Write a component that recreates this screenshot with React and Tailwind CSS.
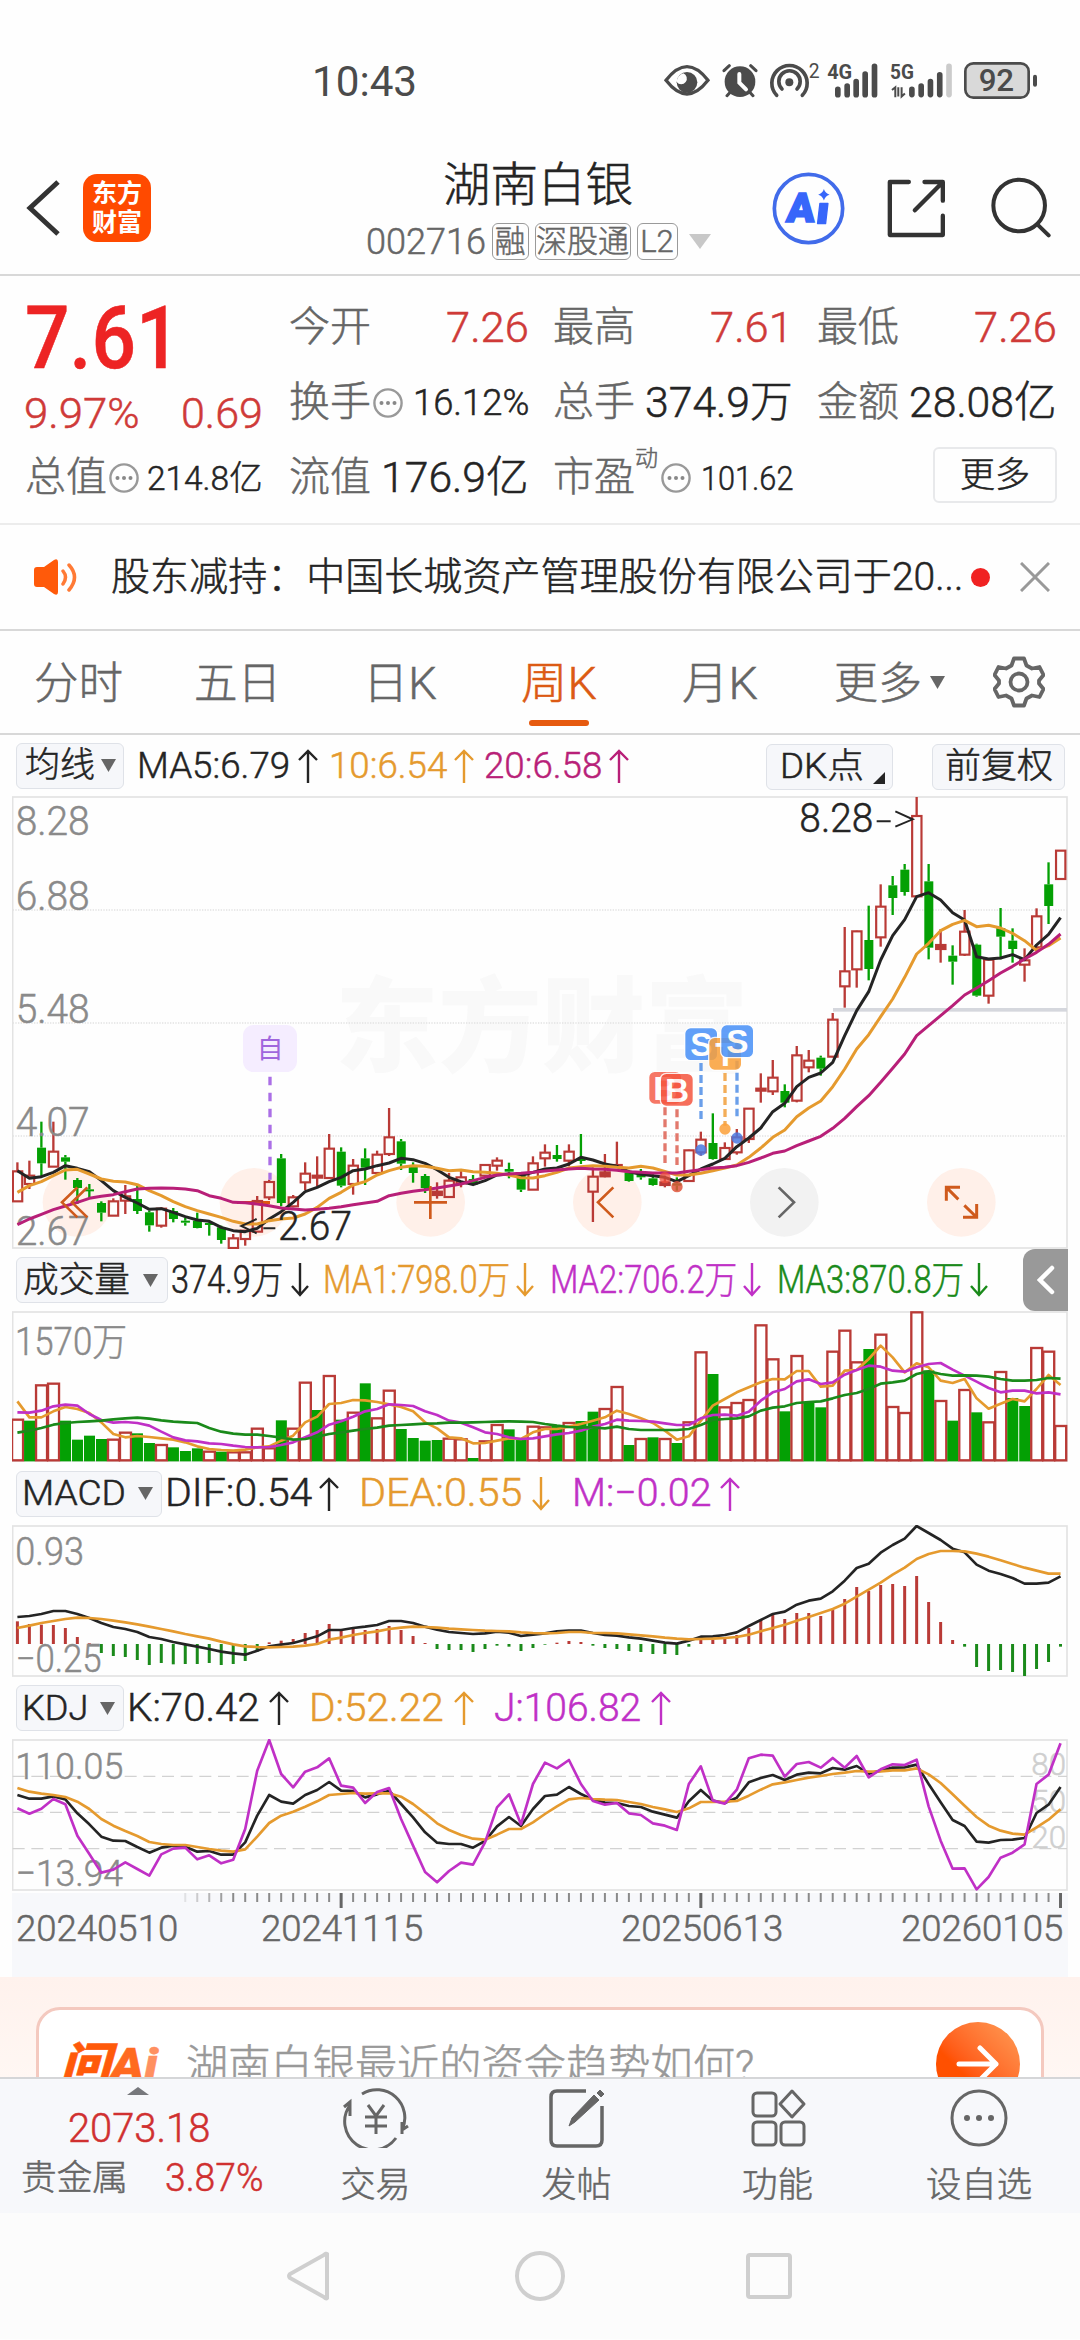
import React, { useLayoutEffect, useRef, useState } from 'react';

const FONT = "font-['Roboto','Noto_Sans_CJK_SC',sans-serif] font-light [-webkit-text-stroke:0.5px]";

// squeezes or stretches a single line of text to the width of its box
const Fit = ({ className = '', children }) => {
  const inner = useRef(null);
  const [scale, setScale] = useState(1);

  useLayoutEffect(() => {
    const el = inner.current;
    setScale(el.parentElement.clientWidth / el.offsetWidth);
  }, [children]);

  return (
    <div className={`shrink-0 whitespace-nowrap leading-none ${className}`}>
      <span ref={inner} className="inline-block origin-left" style={{ transform: `scaleX(${scale})` }}>
        {children}
      </span>
    </div>
  );
};

/* ---------- chart data (one entry per week) ---------- */

// [direction, high, body top, body bottom, low]
const CANDLES = [
  ['r', 1120, 1147, 1237, 1237], ['r', 1115, 1160, 1185, 1200], ['g', 998, 1076, 1123, 1165], ['r', 998, 1088, 1133, 1133],
  ['g', 1098, 1105, 1118, 1172], ['g', 1167, 1173, 1197, 1245], ['g', 1185, 1201, 1206, 1227], ['g', 1237, 1242, 1271, 1297],
  ['r', 1228, 1237, 1280, 1280], ['r', 1188, 1222, 1235, 1275], ['g', 1188, 1230, 1266, 1275], ['g', 1265, 1270, 1309, 1328],
  ['r', 1255, 1259, 1310, 1316], ['g', 1257, 1266, 1290, 1300], ['g', 1287, 1295, 1301, 1310], ['g', 1271, 1295, 1317, 1318],
  ['g', 1300, 1302, 1308, 1340], ['g', 1310, 1315, 1353, 1364], ['r', 1335, 1348, 1377, 1378], ['r', 1325, 1325, 1350, 1370],
  ['r', 1221, 1236, 1328, 1328], ['r', 1172, 1179, 1225, 1233], ['g', 1095, 1108, 1242, 1252], ['r', 1218, 1225, 1252, 1255],
  ['r', 1120, 1154, 1180, 1203], ['r', 1102, 1160, 1166, 1193], ['r', 1035, 1079, 1167, 1167], ['g', 1075, 1088, 1190, 1195],
  ['r', 1110, 1130, 1185, 1217], ['g', 1078, 1108, 1136, 1188], ['r', 1085, 1097, 1152, 1152], ['r', 957, 1045, 1095, 1101],
  ['g', 1050, 1057, 1124, 1143], ['g', 1120, 1130, 1152, 1181], ['g', 1155, 1161, 1197, 1212], ['r', 1180, 1208, 1218, 1229],
  ['r', 1152, 1175, 1224, 1226], ['r', 1143, 1165, 1183, 1195], ['g', 1158, 1170, 1187, 1187], ['r', 1125, 1128, 1160, 1165],
  ['r', 1105, 1115, 1130, 1145], ['g', 1121, 1140, 1148, 1168], ['g', 1160, 1160, 1202, 1209], ['r', 1102, 1123, 1202, 1202],
  ['r', 1066, 1091, 1108, 1133], ['g', 1068, 1098, 1110, 1118], ['r', 1066, 1088, 1115, 1132], ['g', 1035, 1110, 1115, 1125],
  ['r', 1135, 1163, 1208, 1299], ['r', 1095, 1150, 1162, 1165], ['r', 1058, 1128, 1133, 1133], ['g', 1145, 1150, 1176, 1178],
  ['g', 1140, 1158, 1165, 1172], ['g', 1150, 1168, 1188, 1190], ['r', 1160, 1180, 1188, 1195], ['g', 1165, 1183, 1190, 1205],
  ['r', 1082, 1084, 1176, 1176], ['r', 1028, 1052, 1090, 1100], ['g', 973, 1062, 1110, 1112], ['r', 1060, 1077, 1110, 1110],
  ['r', 1020, 1045, 1090, 1097], ['r', 957, 959, 1050, 1062], ['r', 853, 899, 904, 941], ['r', 813, 866, 907, 918],
  ['g', 886, 906, 941, 955], ['r', 771, 799, 935, 940], ['r', 783, 815, 835, 850], ['g', 800, 806, 839, 860],
  ['r', 672, 692, 803, 805], ['r', 414, 547, 592, 656], ['r', 425, 427, 541, 596], ['g', 350, 453, 540, 574],
  ['r', 286, 353, 445, 473], ['g', 261, 289, 327, 378], ['g', 225, 242, 309, 320], ['r', 24, 81, 322, 322],
  ['g', 225, 277, 476, 511], ['r', 420, 468, 480, 521], ['g', 469, 500, 518, 587], ['r', 363, 428, 497, 501],
  ['g', 464, 467, 620, 623], ['r', 510, 512, 620, 644], ['g', 357, 417, 443, 511], ['g', 418, 455, 480, 521],
  ['r', 478, 514, 527, 578], ['r', 358, 382, 475, 480], ['g', 220, 286, 351, 405], ['r', 185, 185, 270, 270],
];

const MA5 = [1145, 1168, 1163, 1150, 1130, 1138, 1148, 1175, 1205, 1225, 1242, 1261, 1259, 1270, 1283, 1293, 1297, 1315, 1325, 1328, 1318, 1290, 1268, 1240, 1208, 1195, 1178, 1165, 1145, 1140, 1130, 1122, 1108, 1112, 1123, 1142, 1165, 1178, 1187, 1175, 1158, 1155, 1160, 1150, 1140, 1137, 1125, 1105, 1113, 1125, 1132, 1148, 1156, 1160, 1165, 1178, 1160, 1140, 1125, 1108, 1073, 1047, 1017, 968, 943, 893, 865, 852, 820, 740, 665, 608, 513, 440, 392, 323, 311, 333, 371, 393, 503, 510, 507, 497, 512, 468, 436, 386];
const MA10 = [1210, 1190, 1178, 1160, 1143, 1141, 1155, 1170, 1177, 1179, 1187, 1205, 1220, 1238, 1253, 1265, 1275, 1285, 1297, 1305, 1305, 1295, 1290, 1287, 1275, 1255, 1228, 1210, 1188, 1178, 1158, 1145, 1135, 1130, 1132, 1138, 1145, 1143, 1148, 1150, 1153, 1158, 1166, 1167, 1160, 1150, 1137, 1133, 1130, 1132, 1135, 1137, 1132, 1137, 1147, 1158, 1158, 1153, 1145, 1137, 1128, 1105, 1077, 1045, 1023, 983, 957, 936, 893, 840, 780, 737, 683, 630, 565, 495, 463, 425, 406, 394, 413, 409, 417, 433, 455, 484, 470, 447];
const MA20 = [1307, 1290, 1276, 1262, 1251, 1240, 1228, 1222, 1217, 1208, 1200, 1198, 1197, 1198, 1200, 1205, 1220, 1228, 1240, 1241, 1245, 1250, 1257, 1260, 1263, 1261, 1258, 1253, 1247, 1242, 1237, 1220, 1213, 1207, 1202, 1197, 1191, 1185, 1175, 1165, 1158, 1155, 1153, 1150, 1146, 1143, 1140, 1138, 1140, 1141, 1144, 1148, 1150, 1152, 1152, 1152, 1147, 1142, 1137, 1135, 1130, 1120, 1107, 1093, 1086, 1070, 1056, 1042, 1018, 988, 953, 920, 880, 838, 795, 740, 710, 680, 650, 618, 597, 575, 552, 532, 510, 490, 466, 435];

const VOLUME = [512, 515, 409, 404, 515, 572, 560, 570, 572, 551, 553, 582, 588, 595, 606, 598, 608, 608, 610, 610, 539, 598, 514, 539, 401, 483, 381, 512, 491, 403, 508, 425, 540, 567, 575, 573, 569, 571, 627, 577, 528, 541, 571, 533, 535, 530, 522, 516, 488, 480, 414, 588, 570, 565, 570, 582, 520, 310, 375, 475, 462, 453, 229, 331, 487, 321, 462, 475, 308, 245, 340, 300, 257, 474, 492, 190, 364, 456, 515, 423, 490, 520, 369, 447, 471, 297, 308, 531];
const VOLUME_UP = 'rgrrggggrrggrgggrgrrrrgrrgrgrgrrgggg' + 'rrgrrggrrgrggrrgrgrgrrgrrrrrgrggrrrgrrrrgrgrgrrggrrr';
const VMA1 = [457, 505, 505, 487, 474, 480, 492, 520, 555, 565, 561, 564, 568, 572, 580, 592, 600, 603, 605, 602, 595, 592, 575, 560, 520, 503, 465, 462, 453, 454, 459, 466, 474, 487, 520, 538, 565, 568, 583, 582, 575, 568, 570, 550, 540, 540, 533, 525, 515, 505, 485, 495, 508, 522, 545, 572, 562, 515, 470, 450, 430, 415, 400, 390, 391, 366, 366, 413, 410, 365, 363, 330, 290, 325, 370, 343, 355, 395, 402, 390, 448, 479, 464, 450, 457, 420, 378, 408];
const VMA2 = [490, 491, 485, 472, 467, 470, 495, 513, 521, 519, 522, 530, 548, 565, 574, 577, 583, 585, 590, 594, 595, 594, 588, 580, 565, 550, 527, 517, 503, 487, 480, 466, 468, 471, 487, 498, 515, 521, 535, 550, 555, 565, 570, 568, 562, 556, 552, 545, 533, 525, 512, 515, 516, 518, 523, 528, 528, 508, 498, 497, 500, 488, 455, 430, 420, 397, 391, 405, 400, 377, 363, 350, 353, 365, 368, 355, 345, 342, 362, 380, 398, 417, 430, 425, 425, 433, 430, 436];
const VMA3 = [551, 545, 537, 527, 522, 519, 517, 515, 511, 508, 506, 509, 514, 518, 520, 522, 537, 548, 554, 557, 557, 561, 566, 572, 570, 563, 555, 550, 545, 540, 536, 530, 528, 526, 524, 523, 521, 521, 520, 519, 518, 517, 518, 519, 525, 530, 534, 535, 535, 538, 533, 540, 543, 543, 543, 543, 540, 528, 513, 510, 508, 502, 485, 476, 472, 462, 459, 457, 448, 438, 432, 420, 404, 400, 395, 375, 367, 375, 380, 379, 380, 383, 390, 395, 395, 393, 387, 389];

const MACD = [1117, 1125, 1127, 1128, 1137, 1164, 1183, 1212, 1221, 1224, 1233, 1248, 1242, 1246, 1245, 1245, 1242, 1248, 1245, 1236, 1208, 1180, 1175, 1170, 1152, 1143, 1125, 1140, 1137, 1143, 1140, 1131, 1143, 1161, 1182, 1200, 1203, 1203, 1209, 1200, 1190, 1193, 1206, 1197, 1187, 1181, 1176, 1179, 1190, 1197, 1200, 1206, 1209, 1215, 1215, 1218, 1193, 1172, 1173, 1168, 1158, 1137, 1113, 1095, 1110, 1092, 1092, 1101, 1082, 1050, 1014, 1026, 1008, 1005, 1011, 981, 1059, 1119, 1173, 1193, 1254, 1266, 1263, 1269, 1281, 1260, 1239, 1193];
const DIF = [1104, 1101, 1095, 1086, 1086, 1095, 1107, 1122, 1134, 1140, 1149, 1164, 1170, 1179, 1186, 1193, 1200, 1208, 1213, 1217, 1205, 1192, 1187, 1182, 1172, 1162, 1143, 1143, 1137, 1133, 1128, 1116, 1116, 1122, 1133, 1142, 1149, 1152, 1155, 1153, 1148, 1151, 1161, 1157, 1153, 1147, 1145, 1145, 1152, 1158, 1160, 1165, 1169, 1175, 1181, 1184, 1175, 1163, 1162, 1158, 1150, 1131, 1113, 1095, 1088, 1067, 1055, 1049, 1027, 995, 957, 944, 911, 888, 869, 831, 852, 873, 899, 910, 947, 965, 975, 987, 1004, 1004, 1001, 982];
const DEA = [1137, 1130, 1122, 1116, 1110, 1106, 1107, 1110, 1115, 1120, 1126, 1133, 1140, 1147, 1155, 1162, 1169, 1178, 1186, 1192, 1194, 1195, 1194, 1193, 1190, 1185, 1172, 1166, 1158, 1152, 1147, 1140, 1136, 1133, 1134, 1136, 1139, 1141, 1143, 1145, 1146, 1147, 1150, 1152, 1153, 1152, 1149, 1149, 1152, 1152, 1153, 1156, 1159, 1162, 1166, 1169, 1171, 1170, 1169, 1167, 1164, 1157, 1147, 1137, 1127, 1115, 1104, 1092, 1080, 1064, 1043, 1022, 1001, 977, 956, 930, 915, 906, 906, 907, 914, 923, 934, 945, 956, 965, 974, 974];

const K = [378, 389, 389, 382, 391, 433, 466, 503, 515, 516, 534, 551, 536, 530, 533, 548, 546, 557, 557, 520, 440, 378, 398, 404, 378, 363, 339, 365, 366, 385, 376, 365, 405, 445, 490, 521, 525, 525, 536, 516, 472, 444, 471, 420, 381, 377, 354, 375, 392, 401, 402, 411, 414, 428, 437, 446, 397, 363, 395, 402, 386, 340, 327, 318, 333, 317, 311, 313, 297, 302, 291, 314, 305, 296, 295, 287, 345, 400, 453, 471, 518, 521, 513, 512, 507, 432, 407, 354];
const D = [357, 368, 374, 378, 384, 398, 420, 450, 470, 486, 501, 519, 525, 528, 528, 534, 540, 545, 548, 541, 503, 462, 440, 428, 413, 397, 378, 375, 372, 374, 373, 373, 383, 405, 433, 463, 483, 498, 509, 512, 497, 480, 480, 460, 435, 412, 391, 387, 390, 392, 393, 399, 405, 414, 421, 429, 418, 399, 399, 398, 396, 380, 362, 346, 340, 333, 326, 321, 315, 311, 306, 308, 307, 304, 304, 298, 316, 342, 376, 410, 444, 470, 485, 494, 497, 475, 452, 421];
const J = [418, 434, 419, 390, 406, 500, 555, 611, 602, 580, 600, 620, 556, 539, 536, 571, 559, 583, 572, 480, 305, 213, 315, 355, 308, 295, 268, 350, 356, 402, 369, 357, 450, 530, 609, 640, 606, 581, 587, 520, 415, 376, 466, 345, 281, 298, 273, 345, 396, 407, 402, 433, 438, 463, 470, 483, 345, 292, 395, 404, 362, 268, 257, 260, 323, 285, 279, 296, 267, 296, 261, 325, 301, 286, 288, 272, 412, 515, 599, 598, 661, 624, 566, 551, 526, 345, 317, 223];

const RED = '#b93a36';
const GREEN = '#04a004';
const BLACK = '#242424';
const ORANGE = '#e59a2e';
const MAGENTA = '#b81f78';
const PURPLE = '#c030c6';
const DARKGREEN = '#1a8a1a';

const xAt = (i) => 52.2 + 35.97 * i;

const Line = ({ data, color, width = 8 }) => (
  <polyline
    points={data.map((y, i) => `${xAt(i).toFixed(1)},${y}`).join(' ')}
    fill="none"
    stroke={color}
    strokeWidth={width}
    strokeLinejoin="round"
  />
);

const Label = ({ x, y, w, size = 120, color = '#8a8a8a', children }) => (
  <text x={x} y={y} fontSize={size} fill={color} stroke={color} strokeWidth="1.5" textLength={w} lengthAdjust="spacingAndGlyphs">
    {children}
  </text>
);

const Frame = ({ top, bottom }) => (
  <rect x="38" y={top} width="3163" height={bottom - top} fill="none" stroke="#e3e3e3" strokeWidth="5" />
);

const Marker = ({ x, y, fill, letter }) => (
  <g opacity="0.85">
    <rect x={x} y={y} width="99" height="99" rx="18" fill={fill} stroke="#fff" strokeWidth="4" />
    <text x={x + 50} y={y + 86} fontSize="100" fontWeight="700" fill="#fff" textAnchor="middle" fontFamily="Liberation Sans">
      {letter}
    </text>
  </g>
);

const Drop = ({ x, y1, y2, color, dash = '24 12' }) => (
  <line x1={x} x2={x} y1={y1} y2={y2} stroke={color} strokeWidth="10" strokeDasharray={dash} />
);

const PriceChart = () => (
  <svg viewBox="36 21 3168 1359" className="block h-[453px] w-[1056px]">
    <text x="1005" y="826" fontSize="310" fontWeight="900" fill="#f9f9f9" textLength="1240" lengthAdjust="spacingAndGlyphs">
      东方财富
    </text>
    {[363, 702, 1041].map((y) => (
      <line key={y} x1="38" x2="3201" y1={y} y2={y} stroke="#e2e2e2" strokeWidth="4" strokeDasharray="4 4" />
    ))}
    <Frame top={24} bottom={1377} />
    <rect x="2499" y="657" width="702" height="11" fill="#d5d7dd" />

    {[231, 762, 1292, 1822, 2884].map((x) => (
      <circle key={x} cx={x} cy="1240" r="103" fill="#fff0e9" />
    ))}
    <circle cx="2353" cy="1240" r="103" fill="#f2f2f2" />
    <rect x="711" y="1236" width="99" height="9" fill="#e0560f" />

    {CANDLES.map(([dir, high, top, bottom, low], i) => {
      const x = xAt(i);
      const up = dir === 'r';
      const body = Math.max(bottom - top, 6);
      return (
        <g key={i}>
          <line x1={x} x2={x} y1={high} y2={top} stroke={up ? RED : GREEN} strokeWidth="7" />
          <line x1={x} x2={x} y1={bottom} y2={low} stroke={up ? RED : GREEN} strokeWidth="7" />
          {up ? (
            <rect x={x - 13.5} y={top} width="28" height={body} fill={body > 12 ? 'none' : RED} stroke={RED} strokeWidth="6.5" />
          ) : (
            <rect x={x - 13} y={top} width="27" height={body} fill={GREEN} />
          )}
        </g>
      );
    })}

    <Label x="47" y="137" w="222">8.28</Label>
    <Label x="47" y="362" w="222">6.88</Label>
    <Label x="47" y="701" w="222">5.48</Label>
    <Label x="47" y="1040" w="222">4.07</Label>
    <Label x="47" y="1367" w="222">2.67</Label>

    <Line data={MA5} color={BLACK} width={9} />
    <Line data={MA10} color={ORANGE} width={9} />
    <Line data={MA20} color={MAGENTA} width={9} />

    {/* high / low callouts */}
    <Label x="2398" y="130" w="222" color={BLACK}>8.28</Label>
    <path d="M2630 97h42M2686 67l52 24-52 22" fill="none" stroke={BLACK} strokeWidth="6" />
    <Label x="834" y="1352" w="222" color={BLACK}>2.67</Label>
    <path d="M770 1290l-46 21 46 22M790 1318h36" fill="none" stroke={BLACK} strokeWidth="6" />

    {/* added to watchlist */}
    <rect x="729" y="708" width="162" height="141" rx="32" fill="#f5edff" />
    <text x="810" y="806" fontSize="80" fontWeight="400" fill="#a066dd" textAnchor="middle">自</text>
    <Drop x={810} y1={863} y2={1172} color="#ab6fe6" dash="26 22" />

    {/* trades */}
    <Drop x={1995} y1={955} y2={1122} color="#e2786c" />
    <Drop x={2031} y1={961} y2={1128} color="#e2786c" />
    <Drop x={2103} y1={822} y2={990} color="#6a9fea" />
    <Drop x={2175} y1={852} y2={1010} color="#f3ad58" />
    <Drop x={2211} y1={815} y2={982} color="#6a9fea" />
    <Marker x={1946} y={847} fill="#f5604c" letter="B" />
    <Marker x={1981} y={853} fill="#f5553f" letter="B" />
    <Marker x={2054} y={716} fill="#4790f8" letter="S" />
    <Marker x={2126} y={745} fill="#fba038" letter="T" />
    <Marker x={2162} y={707} fill="#4790f8" letter="S" />
    <circle cx="1995" cy="1166" r="17" fill="#f0503c" opacity="0.75" />
    <circle cx="2031" cy="1193" r="17" fill="#e0553c" opacity="0.85" />
    <circle cx="2103" cy="1083" r="17" fill="#4a78e0" opacity="0.85" />
    <circle cx="2175" cy="1020" r="17" fill="#fba038" opacity="0.85" />
    <circle cx="2211" cy="1047" r="17" fill="#4a78e0" opacity="0.85" />

    {/* chart controls */}
    <g fill="none" stroke="#cf5a1c" strokeWidth="8">
      <path d="M232 1195l-46 45 46 45M262 1195l-46 45 46 45" />
      <path d="M1242 1240h99M1291 1191v99" />
      <path d="M1840 1195l-46 45 46 45" />
      <path d="M2839 1235v-40h41M2840 1196l35 35M2930 1245v40h-41M2929 1284l-36-35" strokeWidth="9" />
    </g>
    <path d="M2336 1195l46 45-46 45" fill="none" stroke="#666" strokeWidth="8" />
  </svg>
);

const VolumeChart = () => (
  <svg viewBox="36 186 3168 453" className="block h-[151px] w-[1056px]">
    <Frame top={189} bottom={636} />
    <Label x="45" y="318" w="336" size={114}>1570万</Label>
    {VOLUME.map((y, i) =>
      VOLUME_UP[i] === 'r' ? (
        <rect key={i} x={xAt(i) - 16} y={y} width="33" height={634 - y} fill="#fff" stroke={RED} strokeWidth="7" />
      ) : (
        <rect key={i} x={xAt(i) - 16} y={y} width="33" height={637 - y} fill={GREEN} />
      )
    )}
    <Line data={VMA1} color={ORANGE} />
    <Line data={VMA2} color={PURPLE} />
    <Line data={VMA3} color={DARKGREEN} />
  </svg>
);

const MacdChart = () => (
  <svg viewBox="36 828 3168 456" className="block h-[152px] w-[1056px]">
    <Frame top={831} bottom={1281} />
    <Label x="46" y="948" w="206" size={114}>0.93</Label>
    <Label x="47" y="1270" w="258" size={114}>−0.25</Label>
    {MACD.map((y, i) => (
      <line key={i} x1={xAt(i)} x2={xAt(i)} y1="1185" y2={y} stroke={y < 1185 ? RED : DARKGREEN} strokeWidth="9" />
    ))}
    <Line data={DIF} color={BLACK} />
    <Line data={DEA} color={ORANGE} />
  </svg>
);

const KdjChart = () => (
  <svg viewBox="36 210 3168 456" className="block h-[152px] w-[1056px]">
    <Frame top={213} bottom={663} />
    {[322, 430, 539].map((y) => (
      <line key={y} x1="38" x2="3201" y1={y} y2={y} stroke="#d2d2d2" strokeWidth="4" strokeDasharray="36 20" />
    ))}
    <Label x="46" y="330" w="324" size={112}>110.05</Label>
    <Label x="47" y="651" w="322" size={112}>−13.94</Label>
    <Label x="3094" y="318" w="104" size={92} color="#cfcfcf">80</Label>
    <Label x="3094" y="429" w="104" size={92} color="#cfcfcf">50</Label>
    <Label x="3094" y="538" w="104" size={92} color="#cfcfcf">20</Label>
    <Line data={K} color={BLACK} />
    <Line data={D} color={ORANGE} />
    <Line data={J} color={PURPLE} />
  </svg>
);

const TimeAxis = () => (
  <div className="h-[84px] w-[1056px] bg-[#f7f8fb]">
    <svg viewBox="36 0 3168 45" className="block h-[15px] w-[1056px]">
      {VOLUME.map((_, i) => {
        if (i < 14) return null;
        const major = i === 27 || i === 57 || i === 87;
        return (
          <line
            key={i}
            x1={xAt(i)}
            x2={xAt(i)}
            y1="0"
            y2={major ? 45 : 27}
            stroke={major ? '#666' : '#8a8a8a'}
            strokeWidth={major ? 9 : 6}
            opacity={i < 18 ? (i - 13) * 0.2 : 1}
          />
        );
      })}
    </svg>
    <div className="flex pt-[2px] pl-1 text-[37px] text-[#666]">
      <Fit className="w-[162px]">20240510</Fit>
      <Fit className="ml-[83px] w-[162px]">20241115</Fit>
      <Fit className="ml-[198px] w-[162px]">20250613</Fit>
      <Fit className="ml-[118px] w-[162px]">20260105</Fit>
    </div>
  </div>
);

/* ---------- small shared pieces ---------- */

const Caret = ({ className = '' }) => (
  <svg viewBox="0 0 15 13" className={`h-[13px] w-[15px] shrink-0 ${className}`}>
    <path d="M0 0h15L7.5 13z" fill="#666" />
  </svg>
);

const Arrow = ({ down, className = '' }) => (
  <svg viewBox="0 0 20 34" className={`h-[34px] w-5 shrink-0 ${className}`} fill="none" stroke="currentColor" strokeWidth="2.4">
    {down ? <path d="M10 0v32M2 23l8 9 8-9" /> : <path d="M10 34V2M1 11l9-9 9 9" />}
  </svg>
);

const Pill = ({ className = '', children }) => (
  <div className={`flex h-[46px] shrink-0 items-center rounded-[6px] border border-[#dfe2e8] bg-[#f6f7fa] text-[35px] text-[#242424] ${className}`}>
    {children}
  </div>
);

const Dots = () => (
  <svg viewBox="0 0 30 30" className="h-[30px] w-[30px] shrink-0">
    <circle cx="15" cy="15" r="13.6" fill="none" stroke="#999" strokeWidth="2.4" />
    <g fill="#888">
      <circle cx="8.5" cy="15" r="2" />
      <circle cx="15" cy="15" r="2" />
      <circle cx="21.5" cy="15" r="2" />
    </g>
  </svg>
);

/* ---------- sections ---------- */

const StatusBar = () => (
  <div className="flex h-[115px] shrink-0 text-[#4b4b4b]">
    <Fit className="mt-[60px] ml-[312px] w-[105px] text-[43px] font-normal [-webkit-text-stroke:0px]">10:43</Fit>
    <div className="mt-[62px] ml-[247px] flex h-[37px]">
      <svg viewBox="42 36 138 111" className="h-[37px] w-[46px]">
        <path d="M48 91C72 60 92 50 111 50s39 10 63 41c-24 31-44 41-63 41s-39-10-63-41z" fill="none" stroke="#4b4b4b" strokeWidth="10" />
        <circle cx="111" cy="97" r="31" fill="#4b4b4b" />
        <path d="M100 70a17 17 0 11-20 26 30 30 0 0120-26z" fill="#fdfdfd" />
      </svg>
      <svg viewBox="216 36 108 111" className="ml-3 h-[37px] w-9">
        <g stroke="#4b4b4b" strokeWidth="9" strokeLinecap="round" fill="none">
          <path d="M222 62l16-15M318 62l-16-15M242 125l-11 12M298 125l11 12" />
        </g>
        <circle cx="270" cy="95" r="46" fill="#4b4b4b" />
        <path d="M268 72v26l20 20" stroke="#fff" strokeWidth="12" strokeLinecap="round" fill="none" />
      </svg>
      <svg viewBox="360 36 150 111" className="ml-3 h-[37px] w-[50px] overflow-visible">
        <g fill="none" stroke="#4b4b4b" strokeWidth="11" strokeLinecap="round">
          <path d="M380 136a53 53 0 1177 0" />
          <path d="M396 117a32 32 0 1145 0" />
        </g>
        <circle cx="418" cy="97" r="12" fill="#4b4b4b" />
        <text x="476" y="83" fontSize="58" fontWeight="400" fill="#4b4b4b">2</text>
      </svg>
      <svg viewBox="530 36 152 111" className="ml-[7px] h-[37px] w-[51px] overflow-visible">
        <text x="530" y="88" fontSize="60" fontWeight="700" fill="#4b4b4b" textLength="75" lengthAdjust="spacingAndGlyphs">4G</text>
        <g stroke="#4b4b4b" strokeWidth="17" strokeLinecap="round">
          <path d="M562 118v16M590 108v26M617 95v39M644 72v62M672 49v85" />
        </g>
      </svg>
      <svg viewBox="716 36 190 111" className="ml-3 h-[37px] w-[63px] overflow-visible">
        <text x="716" y="88" fontSize="60" fontWeight="700" fill="#4b4b4b" textLength="72" lengthAdjust="spacingAndGlyphs">5G</text>
        <path d="M722 120l10-8v30M741 112v28M751 112v28l10-9" stroke="#4b4b4b" strokeWidth="6" fill="none" />
        <g stroke="#4b4b4b" strokeWidth="17" strokeLinecap="round">
          <path d="M782 118v16M810 108v26M838 95v39M866 74v60" />
          <path d="M894 49v85" stroke="#cbcbcb" />
        </g>
      </svg>
      <svg viewBox="939 36 222 111" className="ml-[11px] h-[37px] w-[74px]">
        <rect x="943" y="40" width="190" height="103" rx="24" fill="#d9d9d9" stroke="#4b4b4b" strokeWidth="8" />
        <path d="M1152 80v24" stroke="#4b4b4b" strokeWidth="12" strokeLinecap="round" />
        <text x="983" y="124" fontSize="94" fontWeight="500" fill="#4b4b4b" textLength="106">92</text>
      </svg>
    </div>
  </div>
);

const Tag = ({ className = '', children }) => (
  <span className={`flex h-[37px] items-center justify-center rounded-[6px] border-[1.5px] border-[#9a9a9a] text-[31px] ${className}`}>
    <span className="leading-none">{children}</span>
  </span>
);

const Header = () => (
  <div className="flex h-[161px] shrink-0 items-start border-b-2 border-[#d8d8d8] pt-[52px]">
    <svg viewBox="0 0 34 56" className="mt-[13px] ml-[26px] h-14 w-[34px]">
      <path d="M32 2L4 28l28 26" fill="none" stroke="#333" strokeWidth="5" />
    </svg>
    <div className="mt-[7px] ml-[23px] flex h-[68px] w-[68px] flex-col items-center justify-center rounded-[14px] bg-[#ff4a00] text-[25px] leading-[29px] font-bold text-white [-webkit-text-stroke:0px]">
      <span>东方</span>
      <span>财富</span>
    </div>
    <div className="-mt-[6px] ml-[214px] flex w-[346px] flex-col items-center">
      <Fit className="w-[190px] text-[47px] text-[#242424]">湖南白银</Fit>
      <div className="mt-[15px] flex items-center gap-[6px] text-[#666]">
        <Fit className="w-[120px] text-[37px]">002716</Fit>
        <Tag className="w-[37px]">融</Tag>
        <Tag className="w-[96px]">深股通</Tag>
        <Tag className="w-[41px]">L2</Tag>
        <svg viewBox="0 0 22 15" className="ml-[5px] h-[15px] w-[22px]">
          <path d="M0 0h22L11 15z" fill="#c8c8c8" />
        </svg>
      </div>
    </div>
    <svg viewBox="366 366 218 218" className="mt-[5px] ml-[61px] h-[73px] w-[73px]">
      <circle cx="475" cy="475" r="102" fill="none" stroke="#416bea" strokeWidth="11" />
      <text x="408" y="515" fontSize="122" fontWeight="900" fill="#3766fa" stroke="#3766fa" strokeWidth="5" textLength="84" lengthAdjust="spacingAndGlyphs" transform="skewX(-5) translate(44 0)">A</text>
      <path d="M509 460h24l-7 60h-24z" fill="#3766fa" stroke="#3766fa" strokeWidth="4" strokeLinejoin="round" />
      <path d="M521 417q4 13 17 17-13 4-17 17-4-13-17-17 13-4 17-17z" fill="#3766fa" />
    </svg>
    <svg viewBox="712 384 176 180" className="mt-[11px] ml-[42px] h-[60px] w-[59px]" fill="none" stroke="#333" strokeWidth="13" strokeLinecap="round" strokeLinejoin="round">
      <path d="M777 396h-57v159h159v-58" />
      <path d="M824 396h55v56M877 398l-82 83" />
    </svg>
    <svg viewBox="1022 382 182 182" className="mt-[10px] ml-[45px] h-[61px] w-[61px]" fill="none" stroke="#333" strokeWidth="12" strokeLinecap="round">
      <circle cx="1106" cy="467" r="77" />
      <path d="M1161 524l33 32" />
    </svg>
  </div>
);

const Quote = () => (
  <div className="flex h-[249px] shrink-0 gap-[26px] border-b-2 border-[#ececec] pt-[14px] pl-[25px] text-[41px] text-[#666]">
    <div className="w-[238px]">
      <div className="flex h-[97px] items-center">
        <Fit className="w-[156px] text-[87px] font-medium text-[#ed2424]">7.61</Fit>
      </div>
      <div className="flex h-[53px] items-center justify-between text-[43px] text-[#cf3a38]">
        <Fit className="-ml-[1px] w-[116px]">9.97%</Fit>
        <Fit className="w-[82px]">0.69</Fit>
      </div>
      <div className="flex h-[75px] items-center">
        <Fit className="mr-[2px] w-[82px]">总值</Fit>
        <Dots />
        <Fit className="ml-auto w-[116px] text-[34px] text-[#242424]">214.8亿</Fit>
      </div>
    </div>
    <div className="grid grid-cols-[240px_240px_240px] grid-rows-[75px_75px_75px] gap-x-6">
      <div className="flex items-center justify-between">
        <Fit className="w-[82px]">今开</Fit>
        <Fit className="w-[83px] text-[43px] text-[#cf3a38]">7.26</Fit>
      </div>
      <div className="flex items-center justify-between">
        <Fit className="w-[82px]">最高</Fit>
        <Fit className="w-[83px] text-[43px] text-[#cf3a38]">7.61</Fit>
      </div>
      <div className="flex items-center justify-between">
        <Fit className="w-[82px]">最低</Fit>
        <Fit className="w-[83px] text-[43px] text-[#cf3a38]">7.26</Fit>
      </div>
      <div className="flex items-center">
        <Fit className="mr-[2px] w-[82px]">换手</Fit>
        <Dots />
        <Fit className="ml-auto w-[116px] text-[37px] text-[#242424]">16.12%</Fit>
      </div>
      <div className="flex items-center justify-between">
        <Fit className="w-[82px]">总手</Fit>
        <Fit className="w-[148px] text-[43px] text-[#242424]">374.9万</Fit>
      </div>
      <div className="flex items-center justify-between">
        <Fit className="w-[82px]">金额</Fit>
        <Fit className="w-[148px] text-[43px] text-[#242424]">28.08亿</Fit>
      </div>
      <div className="flex items-center justify-between">
        <Fit className="w-[82px]">流值</Fit>
        <Fit className="w-[148px] text-[43px] text-[#242424]">176.9亿</Fit>
      </div>
      <div className="flex items-center">
        <Fit className="w-[82px]">市盈</Fit>
        <span className="-mt-[38px] mr-[3px] text-[23px] leading-none">动</span>
        <Dots />
        <Fit className="ml-auto w-[92px] text-[34px] text-[#242424]">101.62</Fit>
      </div>
      <div className="flex items-center justify-end">
        <div className="-mt-[5px] flex h-[56px] w-[124px] items-center justify-center rounded-[6px] border-2 border-[#e8e9eb] text-[35px] leading-none text-[#242424]">
          更多
        </div>
      </div>
    </div>
  </div>
);

const Notice = () => (
  <div className="flex h-[106px] shrink-0 items-center border-b-2 border-[#d8d8d8]">
    <svg viewBox="0 0 44 36" className="ml-[34px] h-9 w-11">
      <path d="M0 11q0-3 3-3h7L20 1q4-2 4 2v30q0 4-4 2l-10-7H3q-3 0-3-3z" fill="#ff5a0a" />
      <path d="M29 12q5 6 0 13M35 6q11 12 0 25" fill="none" stroke="#ff7a35" strokeWidth="3.5" strokeLinecap="round" />
    </svg>
    <Fit className="ml-[33px] w-[852px] text-[39px] text-[#242424]">股东减持：中国长城资产管理股份有限公司于20...</Fit>
    <span className="ml-2 h-[19px] w-[19px] rounded-full bg-[#f02222]" />
    <svg viewBox="0 0 30 30" className="ml-[30px] h-[30px] w-[30px]">
      <path d="M1 1l28 28M29 1L1 29" stroke="#999" strokeWidth="3" />
    </svg>
  </div>
);

const Tabs = () => (
  <div className="flex h-[104px] shrink-0 items-center border-b-2 border-[#d8d8d8] pt-[4px] text-[44px] text-[#666]">
    <Fit className="ml-[34px] w-[89px]">分时</Fit>
    <Fit className="ml-[71px] w-[87px]">五日</Fit>
    <Fit className="ml-[82px] w-[74px]">日K</Fit>
    <div className="relative ml-[84px] text-[#dc5a14]">
      <Fit className="w-[76px]">周K</Fit>
      <span className="absolute top-[58px] left-[8px] h-[6px] w-[60px] rounded-full bg-[#e65a0f]" />
    </div>
    <Fit className="ml-[85px] w-[76px]">月K</Fit>
    <Fit className="ml-[76px] w-[88px]">更多</Fit>
    <Caret className="-mt-[3px] ml-[8px]" />
    <svg viewBox="0 0 52 52" className="-mt-[4px] ml-[48px] h-[52px] w-[52px]" fill="none" stroke="#666" strokeWidth="3.8" strokeLinejoin="round">
      <path d="M21 2.500h10l2.500 7 5.500 3 7.500-1.500 4 8-4.500 5.500v3l4.500 5.500-4 8-7.500-1.500-5.500 3-2.500 7h-10l-2.500-7-5.500-3-7.500 1.500-4-8 4.500-5.500v-3l-4.500-5.500 4-8 7.500 1.500 5.500-3z" />
      <circle cx="26" cy="26" r="8.5" />
    </svg>
  </div>
);

const MaBar = () => (
  <div className="flex h-[61px] shrink-0 items-center text-[37px]">
    <Pill className="ml-4 w-[108px] pl-2">
      <Fit className="w-[70px]">均线</Fit>
      <Caret className="ml-[6px]" />
    </Pill>
    <Fit className="ml-[13px] w-[153px] text-[#242424]">MA5:6.79</Fit>
    <Arrow className="ml-[8px] text-[#242424]" />
    <Fit className="ml-[11px] w-[118px] text-[#e59a2e]">10:6.54</Fit>
    <Arrow className="ml-[7px] text-[#e59a2e]" />
    <Fit className="ml-[10px] w-[118px] text-[#b81f78]">20:6.58</Fit>
    <Arrow className="ml-[7px] text-[#b81f78]" />
    <Pill className="mt-[2px] ml-[137px] w-[127px] pl-[13px]">
      <Fit className="w-[84px]">DK点</Fit>
      <svg viewBox="0 0 12 12" className="mt-[22px] ml-[9px] h-3 w-3">
        <path d="M12 0v12H0z" fill="#242424" />
      </svg>
    </Pill>
    <Pill className="mt-[2px] ml-[39px] w-[133px] justify-center">
      <Fit className="w-[108px]">前复权</Fit>
    </Pill>
  </div>
);

const VolumeBar = () => (
  <div className="flex h-[62px] shrink-0 items-center text-[38px]">
    <Pill className="ml-4 w-[152px] pl-[6px]">
      <Fit className="w-[107px]">成交量</Fit>
      <Caret className="ml-[13px]" />
    </Pill>
    <Fit className="ml-[3px] w-[112px] text-[#242424]">374.9万</Fit>
    <Arrow down className="ml-[7px] text-[#242424]" />
    <Fit className="ml-[13px] w-[187px] text-[#e59a2e]">MA1:798.0万</Fit>
    <Arrow down className="ml-[5px] text-[#e59a2e]" />
    <Fit className="ml-[15px] w-[187px] text-[#c030c6]">MA2:706.2万</Fit>
    <Arrow down className="ml-[5px] text-[#c030c6]" />
    <Fit className="ml-[15px] w-[187px] text-[#1a8a1a]">MA3:870.8万</Fit>
    <Arrow down className="ml-[5px] text-[#1a8a1a]" />
    <div className="mr-3 ml-auto flex h-[62px] w-[45px] items-center justify-center rounded-l-[12px] bg-[#999]">
      <svg viewBox="0 0 18 30" className="h-[30px] w-[18px]">
        <path d="M15 3L3 15l12 12" fill="none" stroke="#fff" strokeWidth="4.5" strokeLinecap="round" />
      </svg>
    </div>
  </div>
);

const MacdBar = () => (
  <div className="flex h-[63px] shrink-0 items-center text-[39px]">
    <Pill className="ml-4 w-[146px] pl-[5px]">
      <Fit className="w-[104px]">MACD</Fit>
      <Caret className="ml-[12px]" />
    </Pill>
    <Fit className="ml-[3px] w-[147px] text-[#242424]">DIF:0.54</Fit>
    <Arrow className="ml-[7px] text-[#242424]" />
    <Fit className="ml-[20px] w-[164px] text-[#e59a2e]">DEA:0.55</Fit>
    <Arrow down className="ml-[8px] text-[#e59a2e]" />
    <Fit className="ml-[21px] w-[139px] text-[#c030c6]">M:−0.02</Fit>
    <Arrow className="ml-[9px] text-[#c030c6]" />
  </div>
);

const KdjBar = () => (
  <div className="flex h-[62px] shrink-0 items-center text-[39px]">
    <Pill className="ml-4 w-[108px] pl-[5px]">
      <Fit className="w-[66px]">KDJ</Fit>
      <Caret className="ml-[12px]" />
    </Pill>
    <Fit className="ml-[3px] w-[133px] text-[#242424]">K:70.42</Fit>
    <Arrow className="ml-[9px] text-[#242424]" />
    <Fit className="ml-[20px] w-[135px] text-[#e59a2e]">D:52.22</Fit>
    <Arrow className="ml-[10px] text-[#e59a2e]" />
    <Fit className="ml-[20px] w-[147px] text-[#c030c6]">J:106.82</Fit>
    <Arrow className="ml-[10px] text-[#c030c6]" />
  </div>
);

const AskAi = () => (
  <div className="h-[100px] shrink-0 overflow-hidden bg-gradient-to-b from-[#fff2ed] to-[#fff7f3] px-9 pt-[30px]">
    <div className="flex h-[114px] items-center rounded-[24px] border-[3px] border-[#f4c9bf] bg-white pl-[21px]">
      <Fit className="w-[98px] text-[45px] font-black text-[#ff5a0a] italic">
        问<span className="text-[#ff6a20]">A</span><span className="text-[#ff8f60]">i</span>
      </Fit>
      <Fit className="ml-[28px] w-[568px] pt-[3px] text-[42px] text-[#999]">湖南白银最近的资金趋势如何?</Fit>
      <div className="mr-[21px] ml-auto flex h-[84px] w-[84px] items-center justify-center rounded-full bg-gradient-to-tr from-[#ff5000] from-35% to-[#ff9c55]">
        <svg viewBox="0 0 44 40" className="h-10 w-11" fill="none" stroke="#fff" strokeWidth="5" strokeLinecap="round" strokeLinejoin="round">
          <path d="M3 20h37M24 4l16 16-16 16" />
        </svg>
      </div>
    </div>
  </div>
);

const Action = ({ label, width, children }) => (
  <div className="flex w-[201px] flex-col items-center">
    <svg viewBox="0 0 66 60" className="mt-[9px] h-[60px] w-[66px]" fill="none" stroke="#666" strokeWidth="3">
      {children}
    </svg>
    <Fit className={`mt-[20px] text-[35px] text-[#666] ${width}`}>{label}</Fit>
  </div>
);

const BottomBar = () => (
  <div className="flex h-[136px] shrink-0 border-t-2 border-[#d5d6d8] bg-[#f7f8fb]">
    <div className="flex w-[275px] flex-col items-center">
      <svg viewBox="0 0 22 8" className="mt-2 h-2 w-[22px]">
        <path d="M11 0l11 8H0z" fill="#77787c" />
      </svg>
      <Fit className="mt-[13px] ml-[2px] w-[142px] text-[41px] text-[#d03030]">2073.18</Fit>
      <div className="mt-[10px] ml-[8px] flex items-center">
        <Fit className="mr-[37px] w-[107px] text-[35px] text-[#666]">贵金属</Fit>
        <Fit className="w-[98px] text-[38px] text-[#d03030]">3.87%</Fit>
      </div>
    </div>
    <Action label="交易" width="w-[70px]">
      <path d="M19 6a28 28 0 0140 36M53 50a28 28 0 01-46-33M59 46v-12M59 42l6-4M7 28V14L1 19" />
      <path d="M25 17l8 11 8-11M33 28v18M22 29h22M22 38h22" />
    </Action>
    <Action label="发帖" width="w-[70px]">
      <path d="M42 3H13q-6 0-6 6v43q0 6 6 6h39q6 0 6-6V18" strokeWidth="3.5" />
      <path d="M25 38l3-8L50 7l5 5-24 22zM53 5l3-3 4 4-3 3z" fill="#666" strokeWidth="1" />
    </Action>
    <Action label="功能" width="w-[71px]">
      <rect x="8" y="5" width="23" height="23" rx="4" />
      <rect x="8" y="34" width="23" height="23" rx="4" />
      <rect x="36" y="34" width="23" height="23" rx="4" />
      <path d="M47 3l12 13-12 13-12-13z" strokeLinejoin="round" />
    </Action>
    <Action label="设自选" width="w-[106px]">
      <circle cx="33" cy="30" r="27" />
      <g fill="#666" stroke="none">
        <circle cx="21" cy="30" r="3" />
        <circle cx="33" cy="30" r="3" />
        <circle cx="45" cy="30" r="3" />
      </g>
    </Action>
  </div>
);

const SystemNav = () => (
  <div className="flex h-[126px] shrink-0 items-start bg-[#fcfcfc] pt-[38px]">
    <svg viewBox="0 0 44 50" className="ml-[286px] h-[50px] w-11">
      <path d="M41 3v44q-1 1-3-1L4 27q-2-2 0-4L38 4q2-2 3-1z" fill="none" stroke="#cfcfcf" strokeWidth="4" />
    </svg>
    <div className="ml-[185px] h-[50px] w-[50px] rounded-full border-4 border-[#cfcfcf]" />
    <div className="mt-[2px] ml-[181px] h-[46px] w-[46px] rounded-[4px] border-4 border-[#cfcfcf]" />
  </div>
);

const App = () => (
  <div className={`flex h-[2340px] w-[1080px] flex-col overflow-hidden bg-[#fefefe] ${FONT}`}>
    <StatusBar />
    <Header />
    <Quote />
    <Notice />
    <Tabs />
    <MaBar />
    <div className="px-3">
      <PriceChart />
    </div>
    <VolumeBar />
    <div className="px-3">
      <VolumeChart />
    </div>
    <MacdBar />
    <div className="px-3">
      <MacdChart />
    </div>
    <KdjBar />
    <div className="px-3 pb-[2px]">
      <KdjChart />
    </div>
    <div className="px-3">
      <TimeAxis />
    </div>
    <AskAi />
    <BottomBar />
    <SystemNav />
  </div>
);

export default App;
